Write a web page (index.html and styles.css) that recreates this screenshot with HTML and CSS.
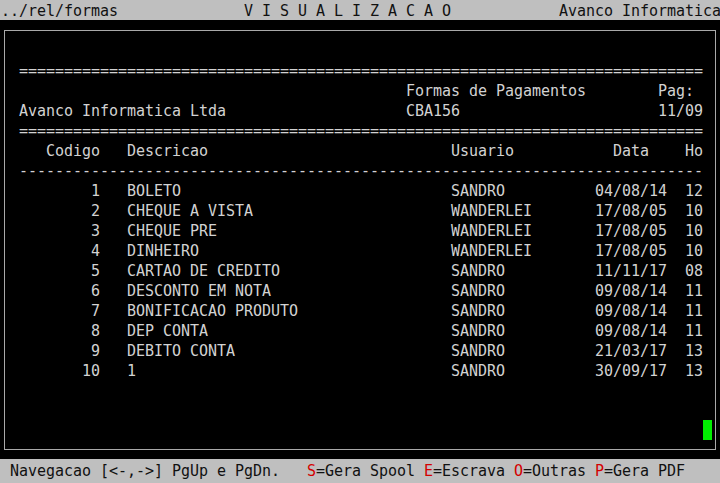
FILE: index.html
```html
<!DOCTYPE html>
<html lang="pt">
<head>
<meta charset="utf-8">
<title>Formas de Pagamentos</title>
<link rel="stylesheet" href="styles.css">
</head>
<body>
<div class="screen">
  <header class="titlebar">
    <span>../rel/formas</span>
    <span>V I S U A L I Z A C A O</span>
    <span>Avanco Informatica</span>
  </header>
  <main class="area">
    <section class="box">
      <div class="rule">============================================================================</div>
      <div class="report-head">
        <span></span><span>Formas de Pagamentos</span><span>Pag:</span>
        <span>Avanco Informatica Ltda</span><span>CBA156</span><span>11/09</span>
      </div>
      <div class="rule">============================================================================</div>
      <div class="table">
        <span class="code">Codigo</span><span>Descricao</span><span>Usuario</span><span class="date-h">Data</span><span class="hour">Ho</span>
        <div class="rule">----------------------------------------------------------------------------</div>
        <span class="code">1</span><span>BOLETO</span><span>SANDRO</span><span>04/08/14</span><span class="hour">12</span>
        <span class="code">2</span><span>CHEQUE A VISTA</span><span>WANDERLEI</span><span>17/08/05</span><span class="hour">10</span>
        <span class="code">3</span><span>CHEQUE PRE</span><span>WANDERLEI</span><span>17/08/05</span><span class="hour">10</span>
        <span class="code">4</span><span>DINHEIRO</span><span>WANDERLEI</span><span>17/08/05</span><span class="hour">10</span>
        <span class="code">5</span><span>CARTAO DE CREDITO</span><span>SANDRO</span><span>11/11/17</span><span class="hour">08</span>
        <span class="code">6</span><span>DESCONTO EM NOTA</span><span>SANDRO</span><span>09/08/14</span><span class="hour">11</span>
        <span class="code">7</span><span>BONIFICACAO PRODUTO</span><span>SANDRO</span><span>09/08/14</span><span class="hour">11</span>
        <span class="code">8</span><span>DEP CONTA</span><span>SANDRO</span><span>09/08/14</span><span class="hour">11</span>
        <span class="code">9</span><span>DEBITO CONTA</span><span>SANDRO</span><span>21/03/17</span><span class="hour">13</span>
        <span class="code">10</span><span>1</span><span>SANDRO</span><span>30/09/17</span><span class="hour">13</span>
      </div>
      <div class="cursor-row"><span class="cursor"></span></div>
    </section>
  </main>
  <footer class="status">Navegacao [&lt;-,-&gt;] PgUp e PgDn.   <span class="key">S</span>=Gera Spool <span class="key">E</span>=Escrava <span class="key">O</span>=Outras <span class="key">P</span>=Gera PDF</footer>
</div>
</body>
</html>
```

FILE: styles.css
```css
html, body {
  margin: 0;
  padding: 0;
  background: #000;
}

body {
  font-family: "DejaVu Sans Mono", "Liberation Mono", monospace;
  font-size: 15px;
  line-height: 20px;
  letter-spacing: -0.031px;
  color: #d2d2d2;
}

.screen {
  display: flex;
  flex-direction: column;
  width: 720px;
  height: 483px;
  overflow: hidden;
}

.titlebar {
  box-sizing: border-box;
  display: grid;
  grid-template-columns: 243px 315px 161px;
  height: 20px;
  padding: 1px 0 0 1px;
  background: #bfbfbf;
  color: #111;
  white-space: pre;
  flex: none;
}

.area {
  flex: 1;
  min-height: 0;
  display: flex;
  flex-direction: column;
  padding: 10px 4px 9px;
}

.box {
  flex: 1;
  display: flex;
  flex-direction: column;
  border: 1px solid #a9a9a9;
  padding: 30px 4px 8px 14px;
}

.rule {
  width: 684px;
  height: 20px;
  white-space: pre;
}

.report-head {
  display: grid;
  grid-template-columns: 387px 252px 45px;
  white-space: pre;
}

.table {
  display: grid;
  grid-template-columns: 108px 324px 144px 72px 36px;
  white-space: pre;
}

.table .rule {
  grid-column: 1 / -1;
}

.table .code {
  text-align: right;
  padding-right: 27px;
}

.table .hour {
  text-align: right;
}

.table .date-h {
  text-align: center;
}

.cursor-row {
  margin-top: auto;
  margin-bottom: 1px;
  display: flex;
  justify-content: flex-end;
  margin-right: -1px;
}

.cursor {
  width: 9px;
  height: 20px;
  background: #00f000;
}

.status {
  box-sizing: border-box;
  flex: none;
  height: 24px;
  padding: 2px 0 2px 10px;
  background: #bfbfbf;
  color: #111;
  white-space: pre;
}

.key {
  color: #d40000;
}
```
